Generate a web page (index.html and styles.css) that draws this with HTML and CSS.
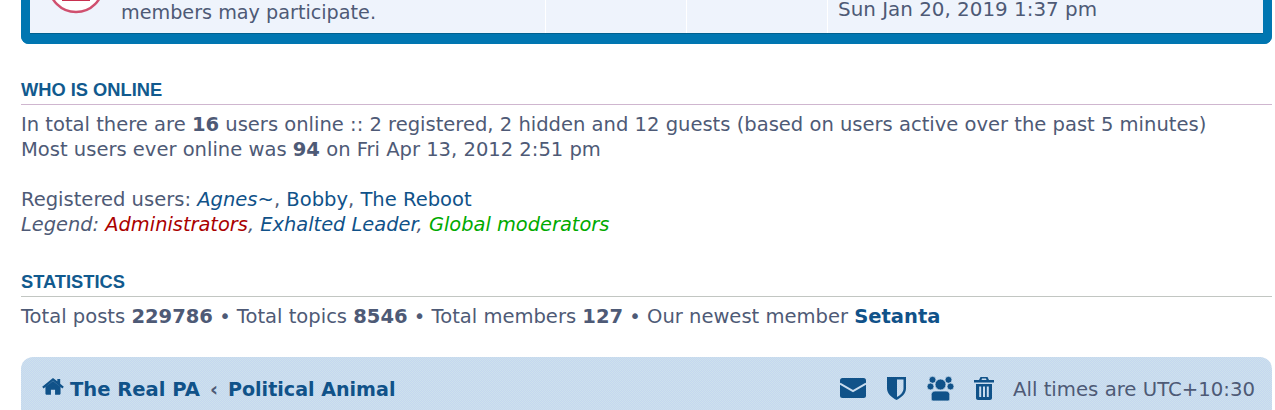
FILE: index.html
```html
<!DOCTYPE html>
<html lang="en">
<head>
    <meta charset="UTF-8">
    <title>The Real PA - Political Animal</title>
    <link rel="stylesheet" href="styles.css">
</head>
<body>

<div class="forum-box">
    <div class="forum-row">
        <div class="forum-icon">
            <svg width="60" height="60" viewBox="0 0 60 60"><circle cx="30" cy="30" r="27" fill="#fff" stroke="#d0506f" stroke-width="2.500"/><rect x="16" y="16" width="28" height="30" fill="#c8304f"/></svg>
        </div>
        <div class="forum-title">members may participate.</div>
        <div class="forum-stat"></div>
        <div class="forum-stat"></div>
        <div class="forum-last">Sun Jan 20, 2019 1:37 pm</div>
    </div>
</div>

<h3 class="online-head">WHO IS ONLINE</h3>
<p class="block-text">In total there are <strong>16</strong> users online :: 2 registered, 2 hidden and 12 guests (based on users active over the past 5 minutes)<br>
Most users ever online was <strong>94</strong> on Fri Apr 13, 2012 2:51 pm<br><br>
Registered users: <em class="user-blue">Agnes~</em>, <span class="user-blue">Bobby</span>, <span class="user-blue">The Reboot</span><br>
<em class="legend">Legend: <span class="user-red">Administrators</span>, <span class="user-blue">Exhalted Leader</span>, <span class="user-green">Global moderators</span></em></p>

<h3 class="stats-head">STATISTICS</h3>
<p class="block-text">Total posts <strong>229786</strong> &bull; Total topics <strong>8546</strong> &bull; Total members <strong>127</strong> &bull; Our newest member <strong class="user-blue">Setanta</strong></p>

<div class="navbar">
    <div class="crumbs">
        <svg class="icon-home" width="22" height="18" viewBox="0 0 24 20"><path fill="#105289" d="M12 3.200 3.600 10v7.600c0 .5.400.9.900.9h5.200v-5.400h4.600v5.400h5.200c.5 0 .9-.4.900-.9V10zM12 0 0 9.800l1.500 1.800L12 3.100l10.500 8.500 1.500-1.800-4-3.300V1.200h-3.200v2.500z"/></svg>
        <a class="crumb" href="#">The Real PA</a>
        <span class="crumb-sep">&lsaquo;</span>
        <a class="crumb crumb-last" href="#">Political Animal</a>
    </div>
    <div class="nav-right">
        <svg width="26" height="20" viewBox="0 0 26 20"><rect width="26" height="20" rx="2.500" fill="#105289"/><path d="M0 5.500 13 13l13-7.500" fill="none" stroke="#c9dcee" stroke-width="2"/></svg>
        <svg width="19" height="23" viewBox="0 0 19 23"><path fill="#105289" d="M0 0h19v11.500c0 5-4.500 9-9.500 11.500C4.500 20.500 0 16.500 0 11.500zM10 2.500v17.600c3.400-2 6.500-5 6.500-8.600v-9z"/></svg>
        <svg width="27" height="25" viewBox="0 0 27 25"><g fill="#105289" stroke="#c9dcee" stroke-width=".8"><circle cx="5.500" cy="3.800" r="3.500"/><circle cx="21.500" cy="3.800" r="3.500"/><circle cx="3.500" cy="10.500" r="3.500"/><circle cx="23.500" cy="10.500" r="3.500"/><path d="M8 15h11c2 0 3.800 1.500 3.800 3.500V23c0 1.100-.9 2-2 2H6.200c-1.100 0-2-.9-2-2v-4.500C4.200 16.500 6 15 8 15z"/><circle cx="13.500" cy="8.500" r="5.500"/></g></svg>
        <svg class="icon-trash" width="20" height="23" viewBox="0 0 20 23"><path fill="#105289" d="M6.500 0h7L15 3h5v2.500H0V3h5zM8 1.500 7.500 3h5L12 1.500zM2 7h16v14c0 1.100-.9 2-2 2H4c-1.100 0-2-.9-2-2zm3.200 2.500v10.500h2V9.500zm3.800 0v10.500h2V9.500zm3.800 0v10.500h2V9.500z"/></svg>
        <span class="time-note">All times are UTC+10:30</span>
    </div>
</div>

</body>
</html>
```

FILE: styles.css
```css
body {
    font-family: "DejaVu Sans", Verdana, sans-serif;
    font-size: 19.55px;
    line-height: 25px;
    margin: 0;
    height: 410px;
    overflow: hidden;
    padding: 0 3px 0 21px;
    background-color: #fff;
    color: #4e5a76;
}
.forum-box {
    height: 44px;
    box-sizing: border-box;
    background-color: #0076b1;
    border: 9px solid #0076b1;
    border-top: 0;
    border-bottom-width: 10px;
    border-radius: 0 0 8px 8px;
    overflow: hidden;
}
.forum-row {
    height: 34px;
    background: repeating-conic-gradient(#f1f1fc 0 25%, #ecf6fc 0 50%) 0 0 / 2px 2px;
    border-bottom: 1px solid #00608f;
    box-sizing: border-box;
    display: flex;
    align-items: flex-end;
    padding-left: 16px;
}
.forum-icon {
    width: 75px;
    height: 33px;
    overflow: hidden;
    display: flex;
    align-items: flex-end;
    padding-bottom: 18px;
    box-sizing: border-box;
}
.forum-title {
    width: 424px;
    font-size: 19.2px;
    padding-bottom: 8px;
}
.forum-stat {
    width: 140px;
    height: 33px;
    border-left: 1px solid #fff;
}
.forum-last {
    width: 280px;
    height: 33px;
    box-sizing: border-box;
    border-left: 1px solid #fff;
    padding: 0 0 14px 10px;
    font-size: 19.9px;
    line-height: 19px;
    white-space: nowrap;
}
h3 {
    font-family: "Liberation Sans", Arial, sans-serif;
    font-size: 18.3px;
    line-height: 20px;
    font-weight: bold;
    color: #115a8e;
    margin: 0 0 7px;
    padding-bottom: 4px;
}
.online-head {
    margin-top: 36px;
    border-bottom: 1px solid #cfb6cf;
}
.stats-head {
    margin-top: 35px;
    border-bottom: 1px solid #c2c6c2;
}
.block-text {
    margin: 0;
}
.block-text strong {
    font-weight: bold;
}
.legend {
    font-size: 19.4px;
}
.user-blue { color: #105289; }
.user-red { color: #aa0000; }
.user-green { color: #00aa00; }
.navbar {
    margin-top: 28px;
    height: 70px;
    background: repeating-conic-gradient(#c5d6f0 0 25%, #cde2ec 0 50%) 0 0 / 2px 2px;
    border-radius: 12px;
    padding: 18px 17px 0 21px;
    display: flex;
    justify-content: space-between;
    box-sizing: border-box;
}
.crumbs {
    display: flex;
    align-items: center;
    height: 28px;
}
.crumb {
    color: #105289;
    font-weight: bold;
    text-decoration: none;
}
.crumb-last {
    font-size: 19.1px;
}
.icon-home {
    margin-right: 6px;
    margin-bottom: 4px;
}
.crumb-sep {
    margin: 0 10px;
    font-weight: bold;
}
.nav-right {
    display: flex;
    align-items: center;
    gap: 21px;
    height: 26px;
}
.icon-trash {
    margin-left: -1px;
}
.time-note {
    font-size: 19.7px;
    margin-left: -2px;
    margin-top: 2px;
}
```
